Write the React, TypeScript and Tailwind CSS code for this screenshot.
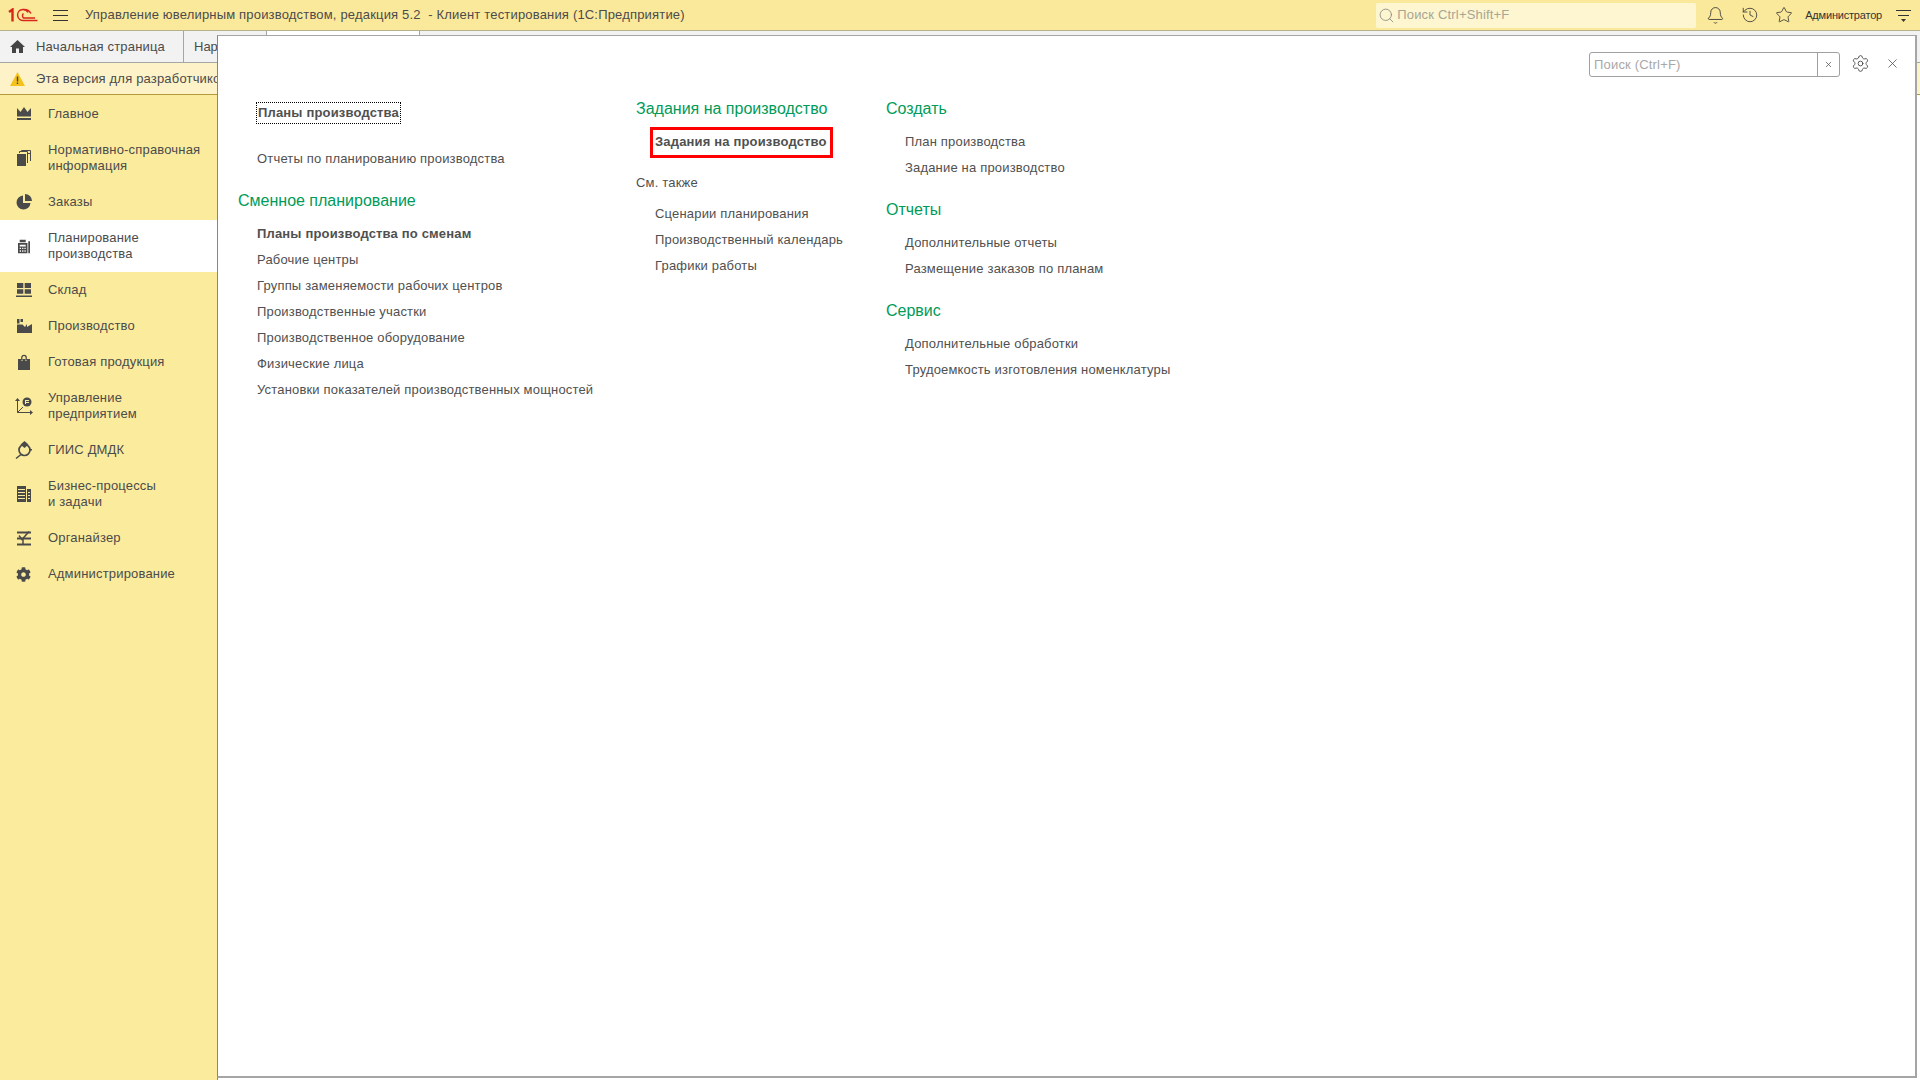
import { Bell, History, Star, Settings, X, Search } from "lucide-react";
import { FaCog } from "react-icons/fa";
import type { ReactNode } from "react";

const ic = "#4a4a4a";
const Crown = () => (
  <svg width="16" height="14" viewBox="0 0 16 14"><path fill={ic} d="M1 1l3.500 4L8 0l3.500 5L15 1v8.500H1zM1 11h14v2H1z" /></svg>
);
const Docs = () => (
  <svg width="14" height="16" viewBox="0 0 14 16"><path fill={ic} d="M0 4h9v12H0z" /><path fill="none" stroke={ic} d="M2.500 3V1.500h8V13M4.500 1V.5h9V11" /><path fill="none" stroke={ic} d="M11 3.500h2.500" /></svg>
);
const Pie = () => (
  <svg width="16" height="16" viewBox="0 0 16 16"><path fill={ic} d="M7 1.500A7 7 0 1 0 14.500 9H7z" /><path fill={ic} d="M9 0a7 7 0 0 1 7 7H9z" /></svg>
);
const Calc = () => (
  <svg width="12" height="15" viewBox="0 0 14 16"><path fill={ic} d="M2 0h7v3H2zM0 4h11v12H0zM12 2h2v14h-2z" /><path fill="#fff" d="M2 6h7v2H2zM2 9.500h1.500V11H2zM4.800 9.500h1.500V11H4.800zM7.500 9.500H9V11H7.500zM2 12.500h1.500V14H2zM4.800 12.500h1.500V14H4.800zM7.500 12.500H9V14H7.500z" /></svg>
);
const Grid = () => (
  <svg width="16" height="14" viewBox="0 0 16 14"><path fill={ic} d="M1 0h6.300v5H1zM8.700 0H15v5H8.700zM1 6.300h6.300v4.500H1zM8.700 6.300H15v4.500H8.700zM0 12.500h16V14H0z" /></svg>
);
const Factory = () => (
  <svg width="16" height="14" viewBox="0 0 16 14"><path fill={ic} d="M1 0h2.500v4.500H1zM4.500 0h2.500v3H4.500zM1 5.500h5.500L9 8l2-3v3l5-3v9H1z" /></svg>
);
const Bag = () => (
  <svg width="14" height="16" viewBox="0 0 14 16"><path fill={ic} d="M1 5h3.500v2h1V5h3v2h1V5H13v11H1z" /><path fill="none" stroke={ic} strokeWidth="1.300" d="M4.800 6V3.500a2.200 2.200 0 0 1 4.400 0V6" /></svg>
);
const Chart = () => (
  <svg width="18" height="18" viewBox="0 0 18 18"><path fill="none" stroke={ic} d="M2.500 3v12.500H15M2.500 15.500L8 10" /><path fill={ic} d="M2.500 1L5 4H0zM18 15.500L15 18v-5z" /><circle cx="12" cy="5" r="4.500" fill={ic} /><path fill="#fbeb9d" d="M10 3h4v1h-3v1h3v1h-3v1h-1z" /></svg>
);
const Giis = () => (
  <svg width="17" height="18" viewBox="0 0 17 18"><circle cx="9.500" cy="9" r="5.500" fill="none" stroke={ic} strokeWidth="1.700" /><path fill={ic} d="M9.500 0l4 3.500-4 3.500-4-3.500zM5.500 13L0.500 17l1 1 5-4zM14 8h3v1.500h-3z" /></svg>
);
const List = () => (
  <svg width="14" height="16" viewBox="0 0 14 16"><path fill={ic} d="M0 0h9v16H0zM10 3h4v13h-4z" /><path stroke="#fbeb9d" d="M1 3.500h7M1 6.500h7M1 9.500h7M1 12.500h7M11 6.500h2M11 9.500h2M11 12.500h2" /></svg>
);
const Org = () => (
  <svg width="16" height="15" viewBox="0 0 16 15"><path stroke={ic} strokeWidth="2" fill="none" d="M1 1.500h14M1 7.500h14M1 13.500h14" /><path stroke={ic} strokeWidth="1.500" fill="none" d="M3 4.500l3 4 7-8" /><path stroke={ic} strokeWidth="1.500" fill="none" d="M7 7v7" /></svg>
);
const Home = () => (
  <svg width="15" height="13" viewBox="0 0 15 13" className="ml-[10px]"><path fill="#444" d="M7.500 0L15 7h-2v6H9V8.500H6V13H2V7H0z" /></svg>
);

const navItems: { icon: ReactNode; label: string[]; active?: boolean }[] = [
  { icon: <Crown />, label: ["Главное"] },
  { icon: <Docs />, label: ["Нормативно-справочная", "информация"] },
  { icon: <Pie />, label: ["Заказы"] },
  { icon: <Calc />, label: ["Планирование", "производства"], active: true },
  { icon: <Grid />, label: ["Склад"] },
  { icon: <Factory />, label: ["Производство"] },
  { icon: <Bag />, label: ["Готовая продукция"] },
  { icon: <Chart />, label: ["Управление", "предприятием"] },
  { icon: <Giis />, label: ["ГИИС ДМДК"] },
  { icon: <List />, label: ["Бизнес-процессы", "и задачи"] },
  { icon: <Org />, label: ["Органайзер"] },
  { icon: <FaCog size={15} color={ic} />, label: ["Администрирование"] },
];

function Heading({ children, className = "" }: { children: ReactNode; className?: string }) {
  return <div className={`h-[26px] leading-[26px] text-[16px] text-[#009b58] whitespace-nowrap ${className}`}>{children}</div>;
}
function Link({ children, bold, className = "" }: { children: ReactNode; bold?: boolean; className?: string }) {
  return (
    <div className={`h-[26px] leading-[26px] pl-[19px] text-[13px] text-[#505050] whitespace-nowrap ${bold ? "font-bold tracking-[0.17px]" : "tracking-[0.18px]"} ${className}`}>
      {children}
    </div>
  );
}

export default function App() {
  return (
    <div className="relative h-[1080px] w-[1920px] overflow-hidden bg-white flex flex-col text-[13px] text-[#4b4b4b] font-['Liberation_Sans','Arial',sans-serif]">
      {/* Top bar */}
      <div className="h-[31px] shrink-0 flex items-center bg-[#fbe99b] border-b border-[#b7b08a]">
        <svg width="30" height="15" viewBox="0 0 30 15" className="ml-[8px] mt-[1px]">
          <g fill="none" stroke="#d9261c">
            <path strokeWidth="2.400" d="M1 4l3.500-2.500V13.500" />
            <path strokeWidth="1.500" d="M20 4.500A5.500 5.500 0 1 0 15.500 12.500H29.500" />
            <path strokeWidth="1.500" d="M23 5.500A8 8 0 0 0 15.500 1.500" />
            <path strokeWidth="1.500" d="M15.500 5.500a3 3 0 0 0 0 4.500H27" />
          </g>
        </svg>
        <div className="ml-[15px] w-[15px] flex flex-col gap-[4px]">
          <div className="h-px bg-[#333]" />
          <div className="h-px bg-[#333]" />
          <div className="h-px bg-[#333]" />
        </div>
        <div className="ml-[17px] text-[13px] tracking-[0.18px] whitespace-pre text-[#4b4b4b]">
          Управление ювелирным производством, редакция 5.2  - Клиент тестирования (1С:Предприятие)
        </div>
        <div className="ml-auto flex items-center h-full">
          <div className="w-[320px] h-[25px] rounded-[2px] bg-[#fdf6d0] flex items-center pl-[2px] text-[13px] tracking-[0.18px] text-[#a8a594]">
            <Search size={17} strokeWidth={1.2} color="#8a8a80" />
            <span className="ml-[2px]">Поиск Ctrl+Shift+F</span>
          </div>
          <Bell size={19} strokeWidth={1.1} color="#333" className="ml-[10px]" />
          <History size={18} strokeWidth={1.1} color="#333" className="ml-[16px]" />
          <Star size={18} strokeWidth={1.1} color="#333" className="ml-[16px]" />
          <span className="ml-[12px] text-[11px] tracking-[-0.2px] text-[#333]">Администратор</span>
          <svg width="15" height="14" viewBox="0 0 15 14" className="ml-[14px] mr-[9px]">
            <path stroke="#333" d="M0 2.500h15M2 7.500h11" />
            <path fill="#333" d="M5 11h5l-2.500 3z" />
          </svg>
        </div>
      </div>

      {/* Tabs */}
      <div className="h-[32px] shrink-0 flex bg-[#f2f2f2] border-b border-[#a5a5a5]">
        <div className="w-[184px] flex items-center border-r border-[#a5a5a5]">
          <Home />
          <span className="ml-[11px] text-[13px] tracking-[0.18px]">Начальная страница</span>
        </div>
        <div className="w-[83px] flex items-center pl-[10px] border-r border-[#a5a5a5] text-[13px]">Нар</div>
        <div className="w-[153px] bg-white border-r border-[#a5a5a5]" />
      </div>

      {/* Notice */}
      <div className="h-[32px] shrink-0 flex items-center bg-[#fef3c8] border-b border-[#b39a3a]">
        <svg width="15" height="14" viewBox="0 0 15 14" className="ml-[10px]">
          <path fill="#f5c21b" d="M7.500 0L15 14H0z" />
          <path fill="#444" d="M6.800 4.500h1.400v5H6.800zM6.800 10.500h1.400V12H6.800z" />
        </svg>
        <span className="ml-[11px] text-[13px] tracking-[0.18px]">Эта версия для разработчиков</span>
      </div>

      {/* Sidebar */}
      <div className="flex-1 w-[218px] flex flex-col pt-[1px] bg-[#fbeb9d] border-r border-[#8f8a5c]">
        {navItems.map((it) => (
          <div
            key={it.label[0]}
            className={`flex items-center shrink-0 ${it.label.length > 1 ? "h-[52px]" : "h-[36px]"} ${it.active ? "bg-white" : ""}`}
          >
            <div className="w-[48px] shrink-0 flex justify-center pr-[1px]">{it.icon}</div>
            <div className="text-[13px] leading-[16px] tracking-[0.18px] whitespace-nowrap">
              {it.label.map((l) => (
                <div key={l}>{l}</div>
              ))}
            </div>
          </div>
        ))}
      </div>

      {/* Panel over the page */}
      <div className="absolute left-[217px] top-[35px] right-[3px] bottom-[2px] bg-white border-l border-t border-r-2 border-b-2 border-[#a5a5a5] border-l-[#8f8a5c]">
        <div className="absolute top-[16px] right-[75px] w-[251px] h-[25px] flex border border-[#a0a0a0] rounded-[3px] bg-white text-[13px] tracking-[0.18px] text-[#a8a8a8]">
          <div className="flex-1 flex items-center pl-[4px] border-r border-[#a0a0a0]">Поиск (Ctrl+F)</div>
          <div className="w-[21px] flex items-center justify-center">
            <X size={9} strokeWidth={2} color="#555" />
          </div>
        </div>
        <Settings size={19} strokeWidth={1.1} color="#444" className="absolute top-[18px] right-[45px]" />
        <X size={15} strokeWidth={1.2} color="#444" className="absolute top-[20px] right-[15px]" />

        <div className="flex pl-[20px]">
          {/* Column 1 */}
          <div className="w-[398px] pt-[66px]">
            <div className="ml-[18px] w-fit h-[22px] leading-[20px] pl-px pr-px text-[13px] font-bold tracking-[0.17px] whitespace-nowrap text-[#505050] border border-dotted border-black">
              Планы производства
            </div>
            <Link className="mt-[22px]">Отчеты по планированию производства</Link>
            <Heading className="mt-[16px]">Сменное планирование</Heading>
            <div className="mt-[7px]">
              <Link bold>Планы производства по сменам</Link>
              <Link>Рабочие центры</Link>
              <Link>Группы заменяемости рабочих центров</Link>
              <Link>Производственные участки</Link>
              <Link>Производственное оборудование</Link>
              <Link>Физические лица</Link>
              <Link>Установки показателей производственных мощностей</Link>
            </div>
          </div>

          {/* Column 2 */}
          <div className="w-[250px] pt-[60px]">
            <Heading>Задания на производство</Heading>
            <div className="relative mt-[7px]">
              <Link bold>Задания на производство</Link>
              <div className="absolute left-[14px] top-[-2px] w-[183px] h-[31px] border-[3px] border-[#ff0000]" />
            </div>
            <div className="mt-[15px] h-[26px] leading-[26px] text-[13px] tracking-[0.18px] text-[#505050]">См. также</div>
            <div className="mt-[5px]">
              <Link>Сценарии планирования</Link>
              <Link>Производственный календарь</Link>
              <Link>Графики работы</Link>
            </div>
          </div>

          {/* Column 3 */}
          <div className="pt-[60px]">
            <Heading>Создать</Heading>
            <div className="mt-[7px]">
              <Link>План производства</Link>
              <Link>Задание на производство</Link>
            </div>
            <Heading className="mt-[16px]">Отчеты</Heading>
            <div className="mt-[7px]">
              <Link>Дополнительные отчеты</Link>
              <Link>Размещение заказов по планам</Link>
            </div>
            <Heading className="mt-[16px]">Сервис</Heading>
            <div className="mt-[7px]">
              <Link>Дополнительные обработки</Link>
              <Link>Трудоемкость изготовления номенклатуры</Link>
            </div>
          </div>
        </div>
      </div>
    </div>
  );
}
